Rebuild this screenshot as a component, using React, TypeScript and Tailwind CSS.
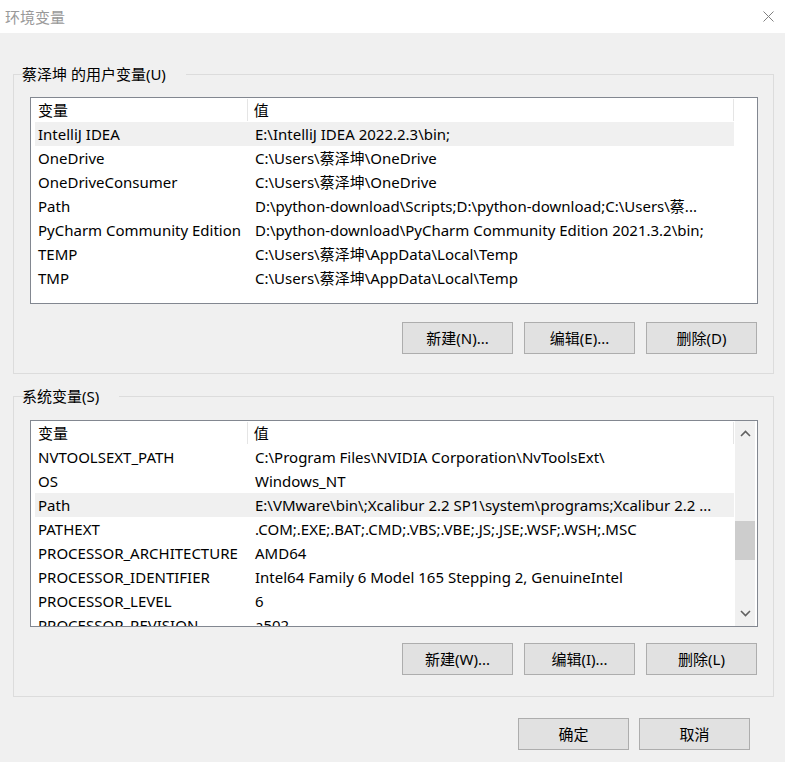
import React from 'react';

type Row = { name: string; value: string };

const userVars: Row[] = [
  { name: 'IntelliJ IDEA', value: 'E:\\IntelliJ IDEA 2022.2.3\\bin;' },
  { name: 'OneDrive', value: 'C:\\Users\\蔡泽坤\\OneDrive' },
  { name: 'OneDriveConsumer', value: 'C:\\Users\\蔡泽坤\\OneDrive' },
  { name: 'Path', value: 'D:\\python-download\\Scripts;D:\\python-download;C:\\Users\\蔡...' },
  { name: 'PyCharm Community Edition', value: 'D:\\python-download\\PyCharm Community Edition 2021.3.2\\bin;' },
  { name: 'TEMP', value: 'C:\\Users\\蔡泽坤\\AppData\\Local\\Temp' },
  { name: 'TMP', value: 'C:\\Users\\蔡泽坤\\AppData\\Local\\Temp' },
];

const sysVars: Row[] = [
  { name: 'NVTOOLSEXT_PATH', value: 'C:\\Program Files\\NVIDIA Corporation\\NvToolsExt\\' },
  { name: 'OS', value: 'Windows_NT' },
  { name: 'Path', value: 'E:\\VMware\\bin\\;Xcalibur 2.2 SP1\\system\\programs;Xcalibur 2.2 ...' },
  { name: 'PATHEXT', value: '.COM;.EXE;.BAT;.CMD;.VBS;.VBE;.JS;.JSE;.WSF;.WSH;.MSC' },
  { name: 'PROCESSOR_ARCHITECTURE', value: 'AMD64' },
  { name: 'PROCESSOR_IDENTIFIER', value: 'Intel64 Family 6 Model 165 Stepping 2, GenuineIntel' },
  { name: 'PROCESSOR_LEVEL', value: '6' },
  { name: 'PROCESSOR_REVISION', value: 'a502' },
];

const Button: React.FC<{ label: string }> = ({ label }) => (
  <button className="w-[111px] h-[32px] bg-[#e1e1e1] border border-[#adadad] text-[15px] text-black flex items-center justify-center">
    {label}
  </button>
);

const Chevron: React.FC<{ up?: boolean }> = ({ up }) => (
  <svg width="11" height="7" viewBox="0 0 11 7">
    <path
      d={up ? 'M1 6 L5.5 1.5 L10 6' : 'M1 1 L5.5 5.5 L10 1'}
      fill="none"
      stroke="#606060"
      strokeWidth="1.6"
    />
  </svg>
);

const VarList: React.FC<{ rows: Row[]; selected: number; scroll?: boolean }> = ({ rows, selected, scroll }) => (
  <div className="w-[728px] h-[207px] border border-[#828790] bg-white flex overflow-hidden">
    <div className="w-[703px] pl-[4px] flex flex-col overflow-hidden">
      <div className="h-[24px] flex shrink-0">
        <div className="w-[212px] pl-[3px] flex items-center">变量</div>
        <div className="w-px bg-[#e5e5e5] my-[1px]" />
        <div className="w-[486px] pl-[6px] flex items-center">值</div>
        <div className="w-px bg-[#e5e5e5] my-[1px]" />
      </div>
      {rows.map((r, i) => (
        <div
          key={r.name}
          className={`h-[24px] w-[699px] flex items-center shrink-0 whitespace-nowrap ${i === selected ? 'bg-[#f0f0f0]' : ''}`}
        >
          <div className="w-[213px] pl-[3px] overflow-hidden">{r.name}</div>
          <div className="flex-1 pl-[7px] overflow-hidden">{r.value}</div>
        </div>
      ))}
    </div>
    {scroll && (
      <div className="w-[20px] ml-[1px] bg-[#f0f0f0] flex flex-col items-center">
        <div className="h-[24px] flex items-center justify-center pt-[1px]">
          <Chevron up />
        </div>
        <div className="flex-1 w-full pt-[76px]">
          <div className="h-[39px] w-full bg-[#cdcdcd]" />
        </div>
        <div className="h-[24px] flex items-center justify-center pb-[2px]">
          <Chevron />
        </div>
      </div>
    )}
  </div>
);

export default function App() {
  return (
    <div
      className="w-[785px] h-[762px] bg-[#f0f0f0] flex flex-col text-[15px] text-black leading-[20px]"
      style={{ fontFamily: "'Noto Sans', 'Noto Sans CJK SC', sans-serif" }}
    >
      <div className="h-[33px] bg-white flex items-center justify-between pl-[5px] pr-[11px] shrink-0">
        <span className="text-[#999999]">环境变量</span>
        <svg width="11" height="11" viewBox="0 0 11 11">
          <path d="M0.5 0.5 L10.5 10.5 M10.5 0.5 L0.5 10.5" stroke="#808080" strokeWidth="1" />
        </svg>
      </div>

      <div className="pl-[13px] pr-[11px] flex flex-col">
        <fieldset className="mt-[31px] border border-[#dcdcdc] pl-[16px] pb-[19px]">
          <legend className="ml-[4px] px-[4px] -translate-x-[16px]">蔡泽坤 的用户变量(U)</legend>
          <div className="mt-[13px]">
            <VarList rows={userVars} selected={0} />
          </div>
          <div className="mt-[18px] flex justify-end gap-[11px] w-[727px]">
            <Button label="新建(N)..." />
            <Button label="编辑(E)..." />
            <Button label="删除(D)" />
          </div>
        </fieldset>

        <fieldset className="mt-[12px] border border-[#dcdcdc] pl-[16px] pb-[21px]">
          <legend className="ml-[4px] px-[4px] -translate-x-[16px]">系统变量(S)</legend>
          <div className="mt-[14px]">
            <VarList rows={sysVars} selected={2} scroll />
          </div>
          <div className="mt-[16px] flex justify-end gap-[11px] w-[727px]">
            <Button label="新建(W)..." />
            <Button label="编辑(I)..." />
            <Button label="删除(L)" />
          </div>
        </fieldset>

        <div className="mt-[21px] flex justify-end gap-[10px] pr-[24px]">
          <Button label="确定" />
          <Button label="取消" />
        </div>
      </div>
    </div>
  );
}
